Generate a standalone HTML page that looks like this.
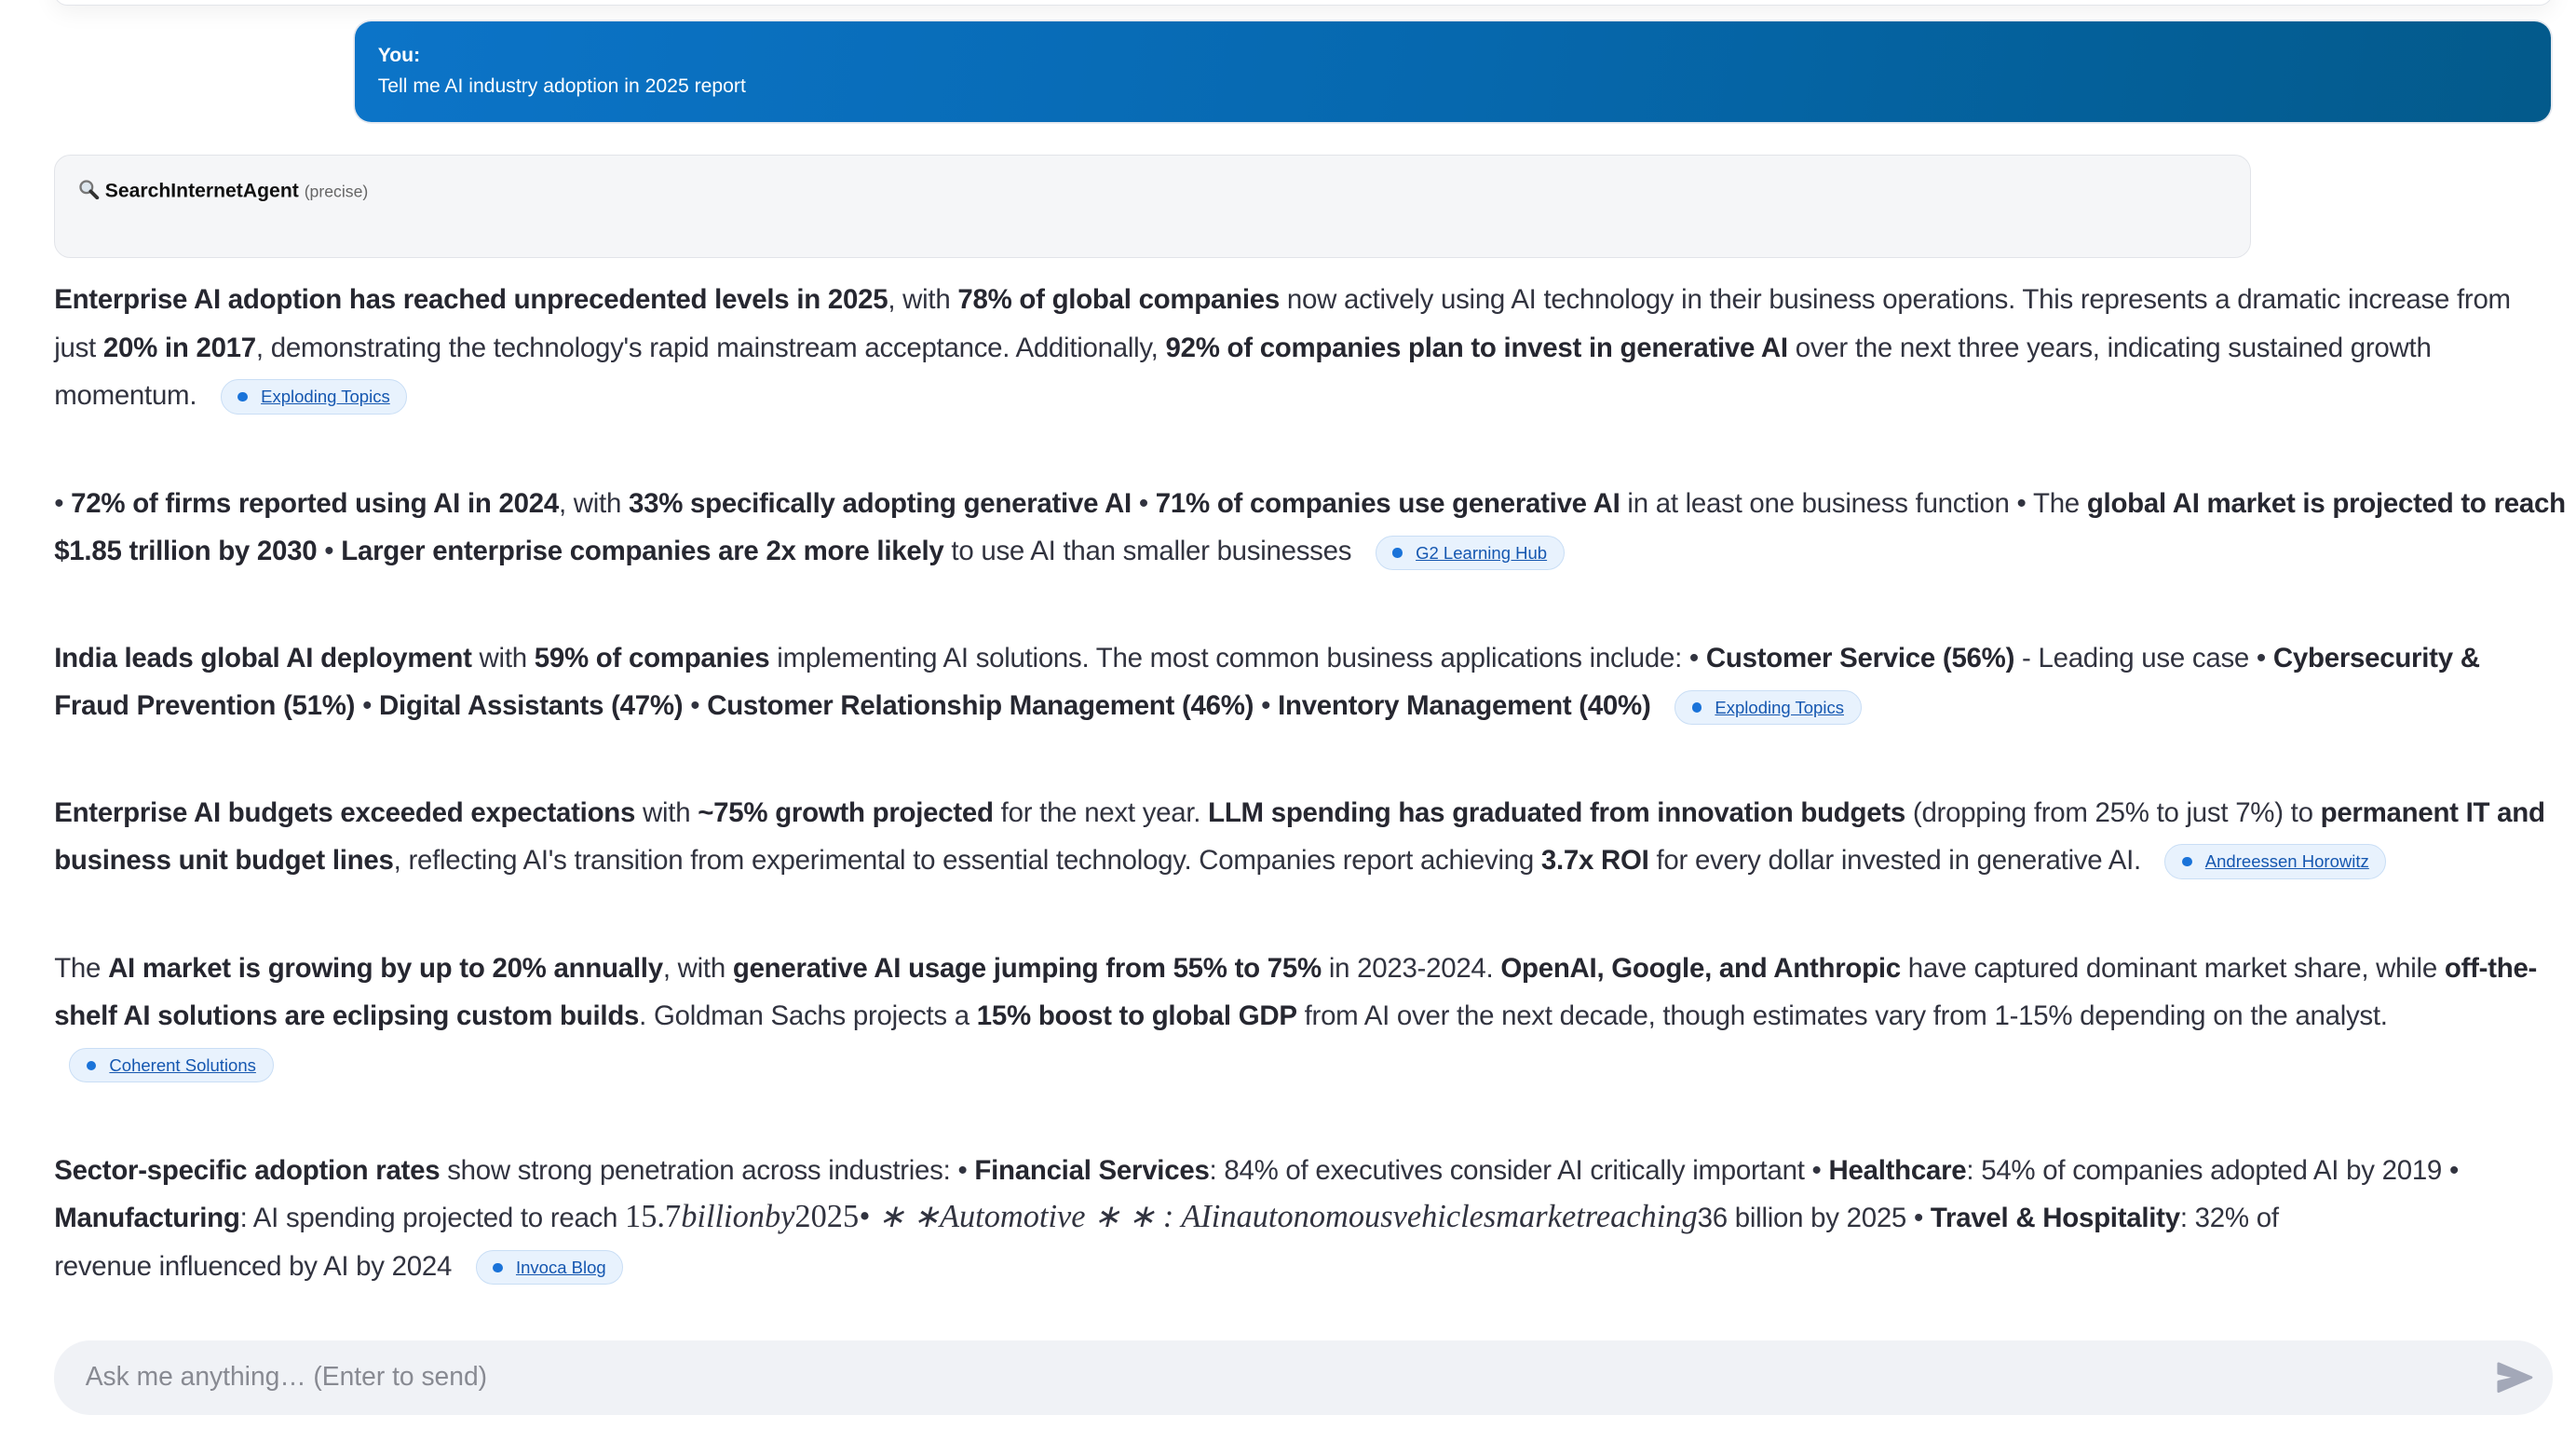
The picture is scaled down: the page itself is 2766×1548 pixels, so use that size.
<!DOCTYPE html>
<html><head><meta charset="utf-8"><style>
html,body{margin:0;padding:0;background:#fff;overflow:hidden;width:2766px;height:1548px}
#w{zoom:1.7640;width:1568px;height:878px;position:relative;font-family:"Liberation Sans",sans-serif;color:#31333f}
.top{position:absolute;left:33px;top:-20px;width:1520px;height:22px;border:1px solid #e3e5ea;border-radius:8px;box-shadow:0 4px 14px rgba(0,0,0,.06);background:#fff}
.you{position:absolute;left:216px;top:13px;width:1337px;height:61px;border-radius:10px;background:linear-gradient(100deg,#0c74c8 0%,#0668ae 50%,#035a8b 100%);color:#fff;box-shadow:0 0 0 1px #e3e7ee}
.you b{position:absolute;left:14px;top:14px;font-size:12px}
.you span{position:absolute;left:14px;top:33px;font-size:12px}
.agent{position:absolute;left:33px;top:94px;width:1336px;height:62px;background:#f5f6f8;border:1px solid #e2e4e9;border-radius:10px}
.agent .t{position:absolute;left:14px;top:14px;font-size:12px;color:#111;white-space:nowrap}
.agent .t small{font-size:10px;color:#666;font-weight:normal}
p{position:absolute;left:33px;margin:0;font-size:16.7px;line-height:29px;white-space:nowrap;letter-spacing:-0.15px}
p b{color:#262730}
.chip{display:inline-block;vertical-align:middle;height:20px;line-height:20px;padding:0 10px 0 24px;margin-left:10px;border:1px solid #c9def5;background:#e8f2fd;border-radius:11px;font-size:10.5px;position:relative;letter-spacing:0}
.chip:before{content:"";position:absolute;left:10px;top:7px;width:6px;height:6px;border-radius:50%;background:#1a73d9}
.chip a{color:#1557b0;text-decoration:underline}
.m{font-family:"Liberation Serif",serif;font-style:italic;font-size:19.5px;letter-spacing:0;line-height:0}
.inp{position:absolute;left:33px;top:816px;width:1521px;height:45px;background:#f0f2f6;border-radius:22px}
.inp span{position:absolute;left:19px;top:12px;font-size:16px;color:#888a92}
</style></head><body><div id="w">
<div class="top"></div>
<div class="you"><b>You:</b><span>Tell me AI industry adoption in 2025 report</span></div>
<div class="agent"><div class="t"><svg width="13" height="13" viewBox="0 0 13 13" style="vertical-align:-2px"><circle cx="5" cy="5" r="3.6" fill="#dde6ee" stroke="#777" stroke-width="1.3"/><path d="M7.6 7.6 L11.5 11.5" stroke="#333" stroke-width="2.2" stroke-linecap="round"/></svg> <b>SearchInternetAgent</b> <small>(precise)</small></div></div>

<p style="top:168px"><b>Enterprise AI adoption has reached unprecedented levels in 2025</b>, with <b>78% of global companies</b> now actively using AI technology in their business operations. This represents a dramatic increase from<br>just <b>20% in 2017</b>, demonstrating the technology's rapid mainstream acceptance. Additionally, <b>92% of companies plan to invest in generative AI</b> over the next three years, indicating sustained growth<br>momentum. <span class="chip"><a>Exploding Topics</a></span></p>

<p style="top:292px">• <b>72% of firms reported using AI in 2024</b>, with <b>33% specifically adopting generative AI</b> • <b>71% of companies use generative AI</b> in at least one business function • The <b>global AI market is projected to reach</b><br><b>$1.85 trillion by 2030</b> • <b>Larger enterprise companies are 2x more likely</b> to use AI than smaller businesses <span class="chip"><a>G2 Learning Hub</a></span></p>

<p style="top:386px"><b>India leads global AI deployment</b> with <b>59% of companies</b> implementing AI solutions. The most common business applications include: • <b>Customer Service (56%)</b> - Leading use case • <b>Cybersecurity &amp;</b><br><b>Fraud Prevention (51%)</b> • <b>Digital Assistants (47%)</b> • <b>Customer Relationship Management (46%)</b> • <b>Inventory Management (40%)</b> <span class="chip"><a>Exploding Topics</a></span></p>

<p style="top:480px"><b>Enterprise AI budgets exceeded expectations</b> with <b>~75% growth projected</b> for the next year. <b>LLM spending has graduated from innovation budgets</b> (dropping from 25% to just 7%) to <b>permanent IT and</b><br><b>business unit budget lines</b>, reflecting AI's transition from experimental to essential technology. Companies report achieving <b>3.7x ROI</b> for every dollar invested in generative AI. <span class="chip"><a>Andreessen Horowitz</a></span></p>

<p style="top:575px">The <b>AI market is growing by up to 20% annually</b>, with <b>generative AI usage jumping from 55% to 75%</b> in 2023-2024. <b>OpenAI, Google, and Anthropic</b> have captured dominant market share, while <b>off-the-</b><br><b>shelf AI solutions are eclipsing custom builds</b>. Goldman Sachs projects a <b>15% boost to global GDP</b> from AI over the next decade, though estimates vary from 1-15% depending on the analyst.<br><span class="chip" style="margin-left:9px"><a>Coherent Solutions</a></span></p>

<p style="top:698px"><b>Sector-specific adoption rates</b> show strong penetration across industries: • <b>Financial Services</b>: 84% of executives consider AI critically important • <b>Healthcare</b>: 54% of companies adopted AI by 2019 •<br><b>Manufacturing</b>: AI spending projected to reach <span class="m"><span style="font-style:normal">15.7</span>billionby<span style="font-style:normal">2025</span>• ∗ ∗Automotive ∗ ∗ : AIinautonomousvehiclesmarketreaching</span>36 billion by 2025 • <b>Travel &amp; Hospitality</b>: 32% of<br>revenue influenced by AI by 2024 <span class="chip"><a>Invoca Blog</a></span></p>

<div class="inp"><span>Ask me anything… (Enter to send)</span>
<svg style="position:absolute;left:1487px;top:13px" width="22" height="19" viewBox="0 0 22 19"><path d="M1 1 L21 9.5 L1 18 L1 12 L12 9.5 L1 7 Z" fill="#a3a8b8" stroke="#a3a8b8" stroke-linejoin="round" stroke-width="1.5"/></svg></div>
</div></body></html>
